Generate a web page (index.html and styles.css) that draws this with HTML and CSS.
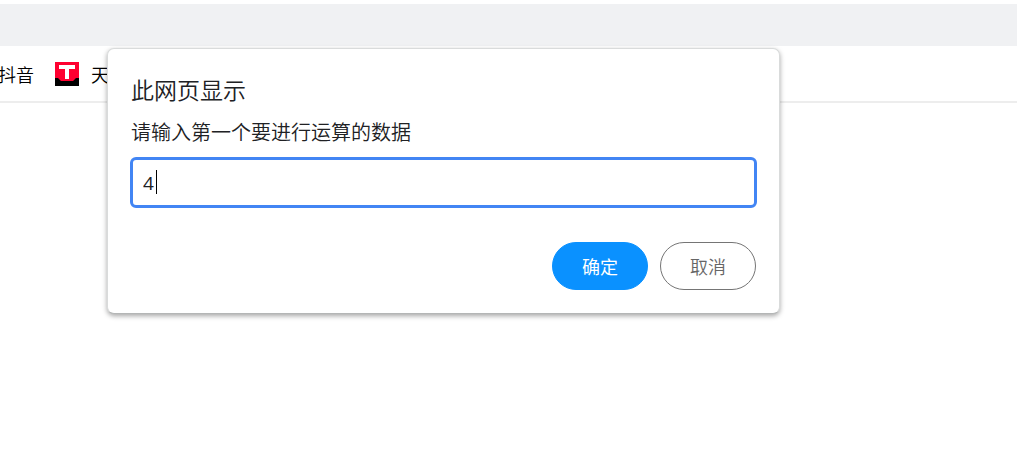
FILE: index.html
```html
<!DOCTYPE html>
<html lang="zh-CN">
<head>
  <meta charset="UTF-8">
  <meta name="viewport" content="width=device-width, initial-scale=1.0">
  <title>此网页显示</title>
  <link rel="stylesheet" href="styles.css">
</head>
<body>
  <header>
    <div class="toolbar"></div>
    <nav class="bookmarks">
      <a href="#">抖音</a>
      <a href="#">
        <svg class="site-icon" viewBox="0 0 24 24" aria-hidden="true">
          <rect width="24" height="24" fill="#000"/>
          <path d="M0 0H24V16H21L18 19H6L3 16H0Z" fill="#ff0030"/>
          <path d="M4 3H20V7H14V17H10V7H4Z" fill="#fff"/>
        </svg>
        天猫
      </a>
    </nav>
  </header>

  <form class="dialog" role="dialog" aria-labelledby="dialogTitle">
    <h1 id="dialogTitle">此网页显示</h1>
    <label for="promptValue">请输入第一个要进行运算的数据</label>
    <div class="field">
      <input type="text" id="promptValue" value="4" autocomplete="off">
      <span class="caret"></span>
    </div>
    <div class="actions">
      <button type="submit" class="ok">确定</button>
      <button type="button" class="cancel">取消</button>
    </div>
  </form>
</body>
</html>
```
FILE: styles.css
```css
* {
  box-sizing: border-box;
}
body {
  margin: 0;
  padding-top: 4px;
  background: #fff;
  color: #202124;
  font-family: "Open Sans", "Noto Sans CJK SC", sans-serif;
  overflow-x: hidden;
}
.toolbar {
  height: 42px;
  background: #f0f1f3;
}
.bookmarks {
  display: flex;
  align-items: center;
  gap: 21px;
  height: 57px;
  margin-left: -2px;
  border-bottom: 2px solid #ededed;
}
.bookmarks a {
  display: flex;
  align-items: center;
  gap: 12px;
  color: #000;
  font-family: "Noto Sans CJK SC", sans-serif;
  font-size: 18px;
  font-weight: 350;
  line-height: 24px;
  text-decoration: none;
}
.site-icon {
  width: 24px;
  height: 24px;
}
/* the prompt floats over the page */
.dialog {
  position: absolute;
  top: 48px;
  left: 107px;
  right: 237px;
  padding: 23px;
  background: #fff;
  border: 1px solid #d9dbdb;
  border-bottom-color: #b4b6b6;
  border-radius: 7px;
  box-shadow: 0 2px 5px rgba(0, 0, 0, 0.35);
}
.dialog h1 {
  margin: 0 0 8px;
  font-size: 23px;
  font-weight: 350;
  line-height: 36px;
}
.dialog label {
  display: block;
  margin-bottom: 8px;
  font-size: 20px;
  font-weight: 350;
  line-height: 33px;
}
.field {
  position: relative;
  margin: 0 -1px 34px;
}
.field input {
  display: block;
  width: 100%;
  height: 51px;
  padding: 0 10px;
  border: 3px solid #4285f4;
  border-radius: 6px;
  outline: none;
  color: #202124;
  font-family: inherit;
  font-size: 19px;
}
.caret {
  position: absolute;
  top: 13px;
  left: 26px;
  width: 1px;
  height: 24px;
  background: #000;
}
.actions {
  display: flex;
  justify-content: flex-end;
  gap: 12px;
}
.actions button {
  width: 96px;
  height: 48px;
  border: 1px solid #757575;
  border-radius: 24px;
  background: #fff;
  color: #666;
  font-family: inherit;
  font-size: 18px;
  font-weight: 350;
}
.actions .ok {
  border-color: #0a91ff;
  background: #0a91ff;
  color: #fff;
  font-weight: 400;
}
```
